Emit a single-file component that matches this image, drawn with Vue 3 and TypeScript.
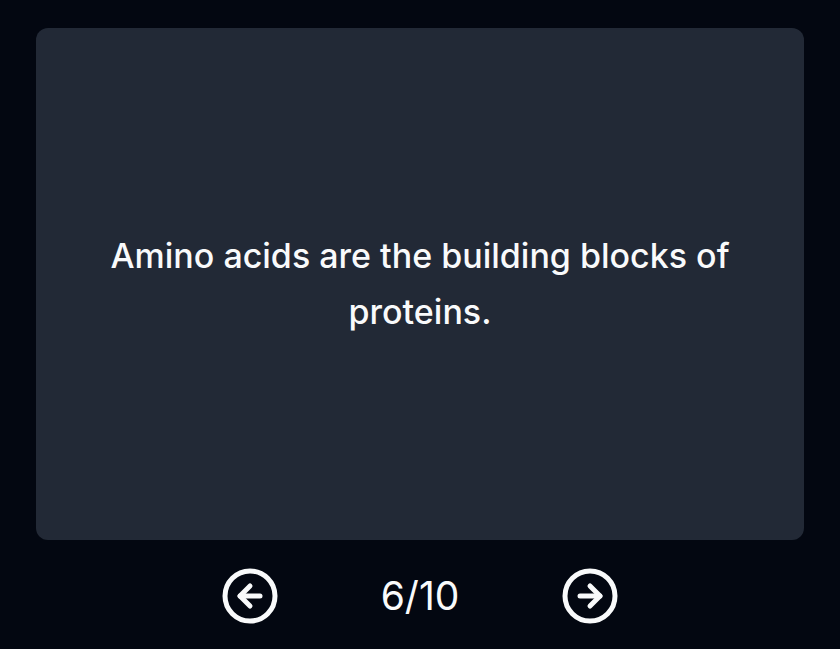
<script setup lang="ts">
import { computed, ref } from 'vue'

const text = ref('Amino acids are the building blocks of proteins.')
const current = ref(6)
const total = 10

const counter = computed(() => `${current.value}/${total}`)

function previous(): void {
  if (current.value > 1) current.value--
}

function next(): void {
  if (current.value < total) current.value++
}
</script>

<template>
  <main class="deck">
    <section class="card">
      <p class="card-text">{{ text }}</p>
    </section>
    <nav class="controls">
      <button class="nav-button" type="button" aria-label="Previous card" @click="previous">
        <svg class="icon" viewBox="0 0 24 24" aria-hidden="true">
          <circle cx="12" cy="12" r="10" />
          <path d="M16 12H8" />
          <path d="m12 8-4 4 4 4" />
        </svg>
      </button>
      <span class="counter">{{ counter }}</span>
      <button class="nav-button" type="button" aria-label="Next card" @click="next">
        <svg class="icon" viewBox="0 0 24 24" aria-hidden="true">
          <circle cx="12" cy="12" r="10" />
          <path d="M8 12h8" />
          <path d="m12 16 4-4-4-4" />
        </svg>
      </button>
    </nav>
  </main>
</template>

<style>
body {
  margin: 0;
  background: #030711;
}
</style>

<style scoped>
.deck {
  box-sizing: border-box;
  min-height: 100vh;
  padding: 28px 36px 20px;
  display: flex;
  flex-direction: column;
  gap: 24px;
  color: #f9fafb;
  font-family: Inter, 'Liberation Sans', sans-serif;
}

.card {
  box-sizing: border-box;
  aspect-ratio: 3 / 2;
  padding: 48px;
  display: flex;
  align-items: center;
  justify-content: center;
  border-radius: 12px;
  background: #222936;
}

.card-text {
  margin: 0;
  font-size: 34px;
  line-height: 56px;
  font-weight: 500;
  text-align: center;
}

.controls {
  display: grid;
  grid-template-columns: 60px 280px 60px;
  align-items: center;
  justify-content: center;
  justify-items: center;
}

.nav-button {
  padding: 0;
  display: flex;
  border: 0;
  border-radius: 50%;
  background: transparent;
  color: inherit;
  cursor: pointer;
}

.icon {
  width: 60px;
  height: 60px;
  fill: none;
  stroke: currentColor;
  stroke-width: 2;
  stroke-linecap: round;
  stroke-linejoin: round;
}

.counter {
  font-size: 39px;
  line-height: 64px;
}
</style>
